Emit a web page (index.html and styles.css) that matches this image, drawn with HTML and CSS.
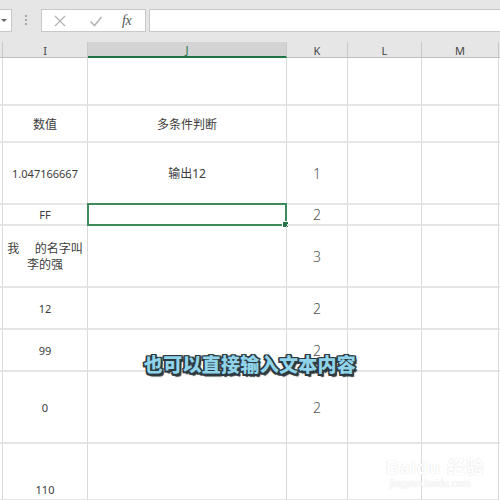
FILE: index.html
```html
<!DOCTYPE html>
<html lang="zh">
<head>
<meta charset="utf-8">
<link rel="stylesheet" href="styles.css">
</head>
<body>
<div class="app">
  <div class="toolbar">
    <div class="namebox"><span class="caret"></span></div>
    <div class="dots"><i></i><i></i><i></i></div>
    <div class="fbtns">
      <svg class="ico" width="14" height="14" viewBox="0 0 14 14"><path d="M2 2 L12 12 M12 2 L2 12" stroke="#b4b4b4" stroke-width="1.3" fill="none"/></svg>
      <svg class="ico" width="14" height="14" viewBox="0 0 14 14"><path d="M1.5 7.5 L5.5 11.5 L12.5 3" stroke="#b4b4b4" stroke-width="1.6" fill="none"/></svg>
      <span class="fx">fx</span>
    </div>
    <div class="finput"></div>
  </div>
  <div class="grid">
    <div class="hd"></div><div class="hd">I</div><div class="hd sel">J</div><div class="hd">K</div><div class="hd">L</div><div class="hd">M</div><div class="hd"></div>

    <div class="c r1"></div><div class="c"></div><div class="c"></div><div class="c"></div><div class="c"></div><div class="c"></div><div class="c"></div>

    <div class="c r2"></div><div class="c cj">数值</div><div class="c cj">多条件判断</div><div class="c"></div><div class="c"></div><div class="c"></div><div class="c"></div>

    <div class="c r3"></div><div class="c">1.047166667</div><div class="c cj">输出12</div><div class="c num">1</div><div class="c"></div><div class="c"></div><div class="c"></div>

    <div class="c r4"></div><div class="c">FF</div><div class="c active"><span class="handle"></span></div><div class="c num">2</div><div class="c"></div><div class="c"></div><div class="c"></div>

    <div class="c r5"></div><div class="c cj wrap">我&nbsp;&nbsp;&nbsp;&nbsp;&nbsp;的名字叫<br>李的强</div><div class="c"></div><div class="c num">3</div><div class="c"></div><div class="c"></div><div class="c"></div>

    <div class="c r6"></div><div class="c">12</div><div class="c"></div><div class="c num">2</div><div class="c"></div><div class="c"></div><div class="c"></div>

    <div class="c r7"></div><div class="c">99</div><div class="c"></div><div class="c num">2</div><div class="c"></div><div class="c"></div><div class="c"></div>

    <div class="c r8"></div><div class="c">0</div><div class="c"></div><div class="c num">2</div><div class="c"></div><div class="c"></div><div class="c"></div>

    <div class="c r9"></div><div class="c bottom">110</div><div class="c"></div><div class="c"></div><div class="c"></div><div class="c"></div><div class="c"></div>
  </div>
  <div class="caption">也可以直接输入文本内容</div>
  <div class="watermark"><div class="wm1">Bai<span class="paw">du</span> 经验</div><div class="wm2">jingyan.baidu.com</div></div>
</div>
</body>
</html>
```

FILE: styles.css
```css
html, body {
  margin: 0;
  padding: 0;
  width: 500px;
  height: 500px;
  overflow: hidden;
  background: #ffffff;
}
.app {
  position: relative;
  width: 500px;
  height: 500px;
  overflow: hidden;
  font-family: "Noto Sans", "Noto Sans CJK SC", sans-serif;
  color: #3a3a3a;
}
.toolbar {
  height: 42px;
  background: #e6e6e6;
  display: flex;
  align-items: flex-start;
  padding-top: 9px;
  box-sizing: border-box;
}
.namebox {
  width: 12px;
  height: 23px;
  box-sizing: border-box;
  background: #fff;
  border: 1px solid #c8c8c8;
  border-left: none;
  position: relative;
}
.caret {
  position: absolute;
  left: 1px;
  top: 9px;
  border-left: 3px solid transparent;
  border-right: 3px solid transparent;
  border-top: 3px solid #666;
}
.dots {
  width: 3px;
  margin: 6px 13px 0 13px;
  display: flex;
  flex-direction: column;
  gap: 2px;
}
.dots i {
  display: block;
  width: 2px;
  height: 2px;
  background: #a8a8a8;
}
.fbtns {
  width: 105px;
  height: 23px;
  box-sizing: border-box;
  background: #fff;
  border: 1px solid #c8c8c8;
  display: flex;
  align-items: center;
  padding-left: 11px;
}
.fbtns .ico:first-child { margin-right: 22px; }
.fbtns .ico:nth-child(2) { margin-right: 19px; }
.fx {
  font-family: "Liberation Serif", serif;
  font-style: italic;
  font-size: 14px;
  color: #555;
  letter-spacing: -0.5px;
}
.finput {
  margin-left: 3px;
  flex: 1;
  height: 23px;
  box-sizing: border-box;
  background: #fff;
  border: 1px solid #c8c8c8;
  border-right: none;
}
.grid {
  display: grid;
  grid-template-columns: 3px 85px 199px 61px 74px 77px 20px;
  grid-template-rows: 16px 48px 37px 62px 21px 62px 42px 42px 72px 57px;
}
.hd {
  background: #e6e6e6;
  border-right: 1px solid #c9c9c9;
  border-bottom: 1px solid #bdbdbd;
  font-size: 11px;
  color: #444;
  display: flex;
  align-items: center;
  justify-content: center;
  line-height: 1;
  padding-top: 1px;
  box-sizing: border-box;
}
.hd.sel {
  background: #d3d3d3;
  border-bottom: 2px solid #217346;
  color: #217346;
}
.c {
  border-right: 1px solid #dadada;
  border-bottom: 2px solid #e6e6e6;
  font-size: 11px;
  display: flex;
  align-items: center;
  justify-content: center;
  text-align: center;
  position: relative;
  box-sizing: border-box;
  color: #3c3c3c;
}
.cj { font-size: 12px; }
.num {
  font-size: 14px;
  font-weight: 300;
  color: #555;
}
.wrap {
  line-height: 16px;
  padding-top: 2px;
}
.bottom {
  align-items: flex-end;
  padding-bottom: 2px;
}
.active {
  border: 2px solid #3f8a5c;
  margin: -2px 0 0 -1px;
}
.handle {
  position: absolute;
  right: -4px;
  bottom: -4px;
  width: 5px;
  height: 5px;
  background: #217346;
  border: 1px solid #fff;
}
.caption {
  position: absolute;
  left: 0;
  right: 0;
  top: 351px;
  text-align: center;
  font-family: "Noto Sans CJK SC", sans-serif;
  font-weight: 900;
  font-size: 19px;
  line-height: 26px;
  color: #8fd4ea;
  letter-spacing: 0.3px;
  text-shadow:
    -1.5px -1.5px 0 #2e3a40, 1.5px -1.5px 0 #2e3a40,
    -1.5px 1.5px 0 #2e3a40, 1.5px 1.5px 0 #2e3a40,
    0 -1.5px 0 #2e3a40, 0 1.5px 0 #2e3a40,
    -1.5px 0 0 #2e3a40, 1.5px 0 0 #2e3a40,
    2px 2.5px 1px #2e3a40;
}
.watermark {
  position: absolute;
  left: 386px;
  top: 458px;
  color: #ffffff;
  text-shadow: 0 0 1px #e2e2e2, 0 0 1px #e2e2e2;
  font-family: "Liberation Sans", "Noto Sans CJK SC", sans-serif;
  font-weight: bold;
}
.wm1 {
  font-size: 18px;
  line-height: 20px;
  letter-spacing: 1px;
}
.wm2 {
  font-size: 10px;
  line-height: 12px;
  margin-left: 4px;
  font-weight: normal;
}
```
